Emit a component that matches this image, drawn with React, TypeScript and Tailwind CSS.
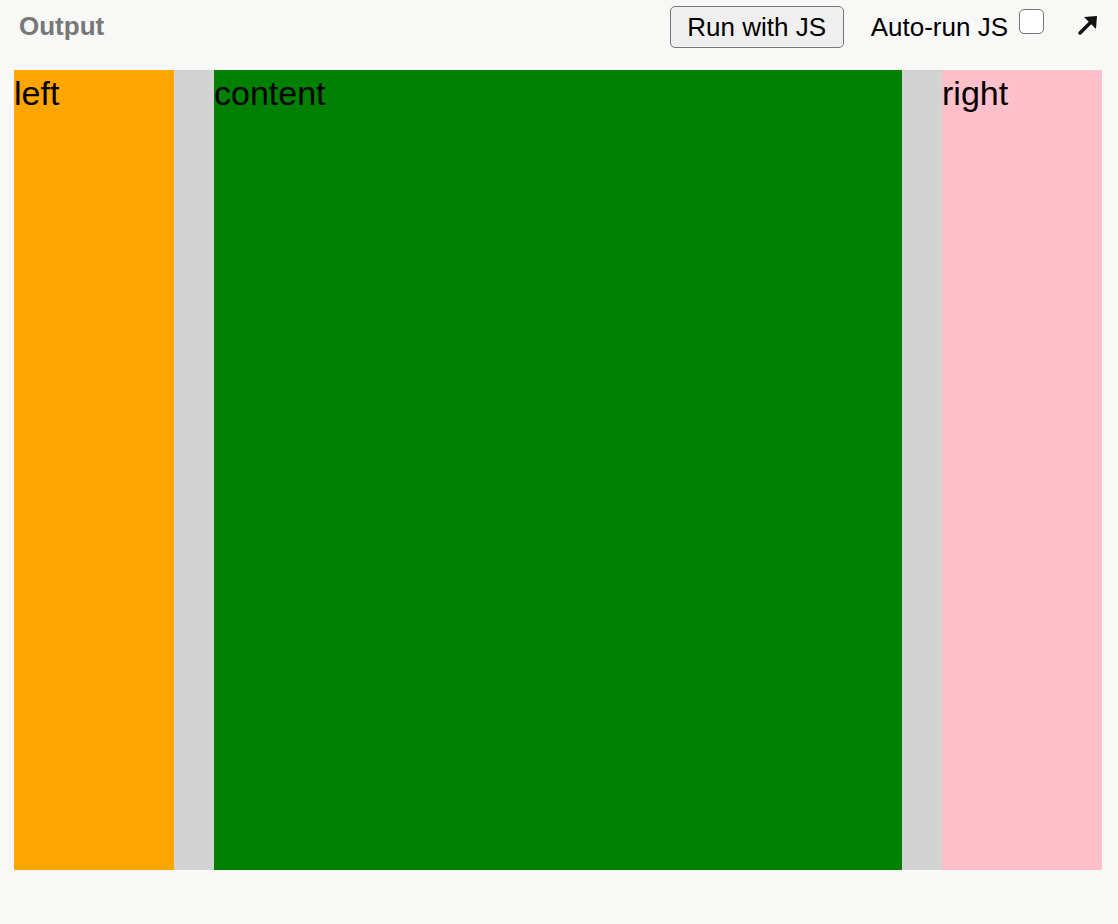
export default function App() {
  return (
    <div className="min-h-[924px] w-full bg-[#f8f8f7] font-['Liberation_Sans',Arial,sans-serif]">
      {/* header bar */}
      <div className="flex h-[70px] items-start">
        <div className="pl-[19px] pt-[7px] text-[26px] font-bold text-[#777777]">Output</div>
        <div className="ml-auto flex items-center pt-[6px]">
          <button className="h-[42px] w-[174px] rounded-[5px] border border-[#767676] bg-[#efefef] text-[26px] text-black">
            Run with JS
          </button>
          <span className="ml-[27px] text-[26px] text-black">Auto-run JS</span>
          <span className="ml-[11px] mt-[-12px] h-[25px] w-[25px] rounded-[5px] border-[1.5px] border-[#767676] bg-white" />
          <svg className="ml-[33px] mr-[20px] mt-[-4px]" width="21" height="21" viewBox="0 0 21 21">
            <path d="M3 18 L15 6" stroke="#111" strokeWidth="3.5" strokeLinecap="round" />
            <path d="M7 2 L20 1 L19 14 Z" fill="#111" />
          </svg>
        </div>
      </div>

      {/* holy grail grid */}
      <div className="ml-[14px] mr-[16px] grid h-[800px] grid-cols-[160px_1fr_160px] gap-x-[40px] bg-[#d3d3d3] text-[34px] leading-[46px] text-black">
        <div className="bg-[#ffa500]">left</div>
        <div className="bg-[#008000]">content</div>
        <div className="bg-[#ffc0cb]">right</div>
      </div>
    </div>
  );
}
